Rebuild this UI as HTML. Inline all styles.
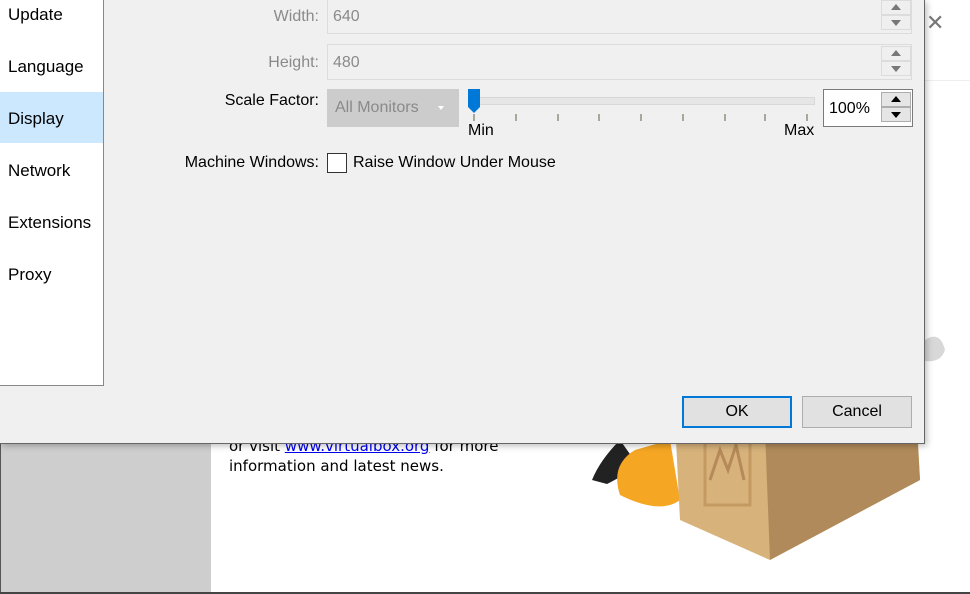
<!DOCTYPE html>
<html><head><style>
*{margin:0;padding:0;box-sizing:border-box}
body{width:970px;height:594px;overflow:hidden;background:#fff;font-family:"Liberation Sans",sans-serif;font-size:16px;position:relative}
.a{position:absolute}
.lbl{position:absolute;text-align:right;width:200px;color:#000}
.dis{color:#8a8a8a}
.spin{position:absolute;border:1px solid #dcdcdc;background:#f0f0f0}
.arr{position:absolute;width:30px;height:15px;border:1px solid #dcdcdc;background:#efefef}
.tri{position:absolute;left:9px;width:0;height:0;border-left:5px solid transparent;border-right:5px solid transparent}
</style></head><body>
<div class="a" style="left:0;top:443px;width:211px;height:151px;background:#cecece;border-left:1px solid #555"></div>
<div class="a" style="left:0;top:592px;width:970px;height:2px;background:#444"></div>
<div class="a" style="left:924px;top:80px;width:46px;height:1px;background:#eee"></div>
<div class="a" style="left:926px;top:10px;color:#777;font-size:22px">✕</div>
<svg class="a" style="left:580px;top:320px" width="390" height="240">
<path d="M345 20 q15 -10 20 10 q-5 15 -25 10z" fill="#d8d8d8"/>
<path d="M40 120 q-20 20 -28 40 l15 4 q20 -10 30 -20z" fill="#222"/>
<path d="M55 130 q-25 15 -15 45 q40 20 60 5 l-10 -60z" fill="#f5a623"/>
<path d="M95 100 l240 -30 l5 90 l-150 80 l-90 -40z" fill="#d7b27a"/>
<path d="M190 240 l150 -80 l-5 -90 l-150 40z" fill="#b08a5a"/>
<path d="M125 120 h45 v65 h-45z" fill="none" stroke="#c49a63" stroke-width="3"/>
<path d="M130 160 l10 -30 l8 20 l8 -25 l8 35" fill="none" stroke="#b5895a" stroke-width="3"/>
</svg>
<div class="a" style="left:229px;top:436px;font-family:'DejaVu Sans',sans-serif;font-size:15px;line-height:20px">or visit <span style="color:#00e;text-decoration:underline">www.virtualbox.org</span> for more<br>information and latest news.</div>
<div class="a" style="left:0;top:0;width:925px;height:444px;background:#f0f0f0;border-right:1px solid #666;border-bottom:1px solid #666;box-shadow:2px 2px 6px rgba(0,0,0,.25)"></div>
<div class="a" style="left:0;top:0;width:104px;height:386px;background:#fff;border-right:1px solid #888;border-bottom:1px solid #888"></div>
<div class="a" style="left:0;top:92px;width:103px;height:51px;background:#cce8ff"></div>
<div class="a" style="left:8px;top:5px;line-height:20px;font-size:17px">Update</div>
<div class="a" style="left:8px;top:57px;line-height:20px;font-size:17px">Language</div>
<div class="a" style="left:8px;top:109px;line-height:20px;font-size:17px">Display</div>
<div class="a" style="left:8px;top:161px;line-height:20px;font-size:17px">Network</div>
<div class="a" style="left:8px;top:213px;line-height:20px;font-size:17px">Extensions</div>
<div class="a" style="left:8px;top:265px;line-height:20px;font-size:17px">Proxy</div>

<div class="lbl dis" style="left:119px;top:8px">Width:</div>
<div class="lbl dis" style="left:119px;top:54px">Height:</div>
<div class="lbl" style="left:119px;top:92px">Scale Factor:</div>
<div class="lbl" style="left:119px;top:154px">Machine Windows:</div>

<div class="spin" style="left:327px;top:-6px;width:585px;height:40px"></div>
<div class="a dis" style="left:333px;top:8px">640</div>
<div class="arr" style="left:881px;top:0"><div class="tri" style="top:3px;border-bottom:6px solid #777"></div></div>
<div class="arr" style="left:881px;top:15px"><div class="tri" style="top:4px;border-top:6px solid #777"></div></div>
<div class="spin" style="left:327px;top:44px;width:585px;height:36px"></div>
<div class="a dis" style="left:333px;top:54px">480</div>
<div class="arr" style="left:881px;top:46px"><div class="tri" style="top:3px;border-bottom:6px solid #777"></div></div>
<div class="arr" style="left:881px;top:61px"><div class="tri" style="top:4px;border-top:6px solid #777"></div></div>

<div class="a" style="left:327px;top:89px;width:132px;height:38px;background:#cccccc"></div>
<div class="a dis" style="left:335px;top:99px">All Monitors</div>
<div class="a" style="left:438px;top:106px;border-left:3px solid transparent;border-right:3px solid transparent;border-top:4px solid #fff"></div>
<div class="a" style="left:469px;top:97px;width:346px;height:8px;background:#e6e6e6;border:1px solid #d8d8d8"></div>
<svg class="a" style="left:467px;top:88px" width="16" height="28"><path d="M1 1h12v18l-6 6l-6-6z" fill="#0078d7"/></svg>
<svg class="a" style="left:0;top:112px" width="900" height="12" stroke="#a8a89a" stroke-width="2"><path d="M474 2v7M516 2v7M558 2v7M599 2v7M641 2v7M683 2v7M725 2v7M765 2v7M807 2v7"/></svg>
<div class="a" style="left:468px;top:122px">Min</div>
<div class="a" style="left:784px;top:122px">Max</div>
<div class="a" style="left:823px;top:89px;width:90px;height:38px;background:#fff;border:1px solid #7a7a7a"></div>
<div class="a" style="left:829px;top:100px">100%</div>
<div class="arr" style="left:881px;top:92px;background:#e5e5e5;border-color:#adadad"><div class="tri" style="top:3px;border-bottom:6px solid #000"></div></div>
<div class="arr" style="left:881px;top:107px;background:#e5e5e5;border-color:#adadad"><div class="tri" style="top:4px;border-top:6px solid #000"></div></div>

<div class="a" style="left:327px;top:153px;width:20px;height:20px;background:#fff;border:1px solid #333"></div>
<div class="a" style="left:353px;top:154px">Raise Window Under Mouse</div>

<div class="a" style="left:682px;top:396px;width:110px;height:32px;background:#e1e1e1;border:2px solid #0078d7;text-align:center;line-height:28px">OK</div>
<div class="a" style="left:802px;top:396px;width:110px;height:32px;background:#e1e1e1;border:1px solid #adadad;text-align:center;line-height:30px">Cancel</div>
</body></html>
